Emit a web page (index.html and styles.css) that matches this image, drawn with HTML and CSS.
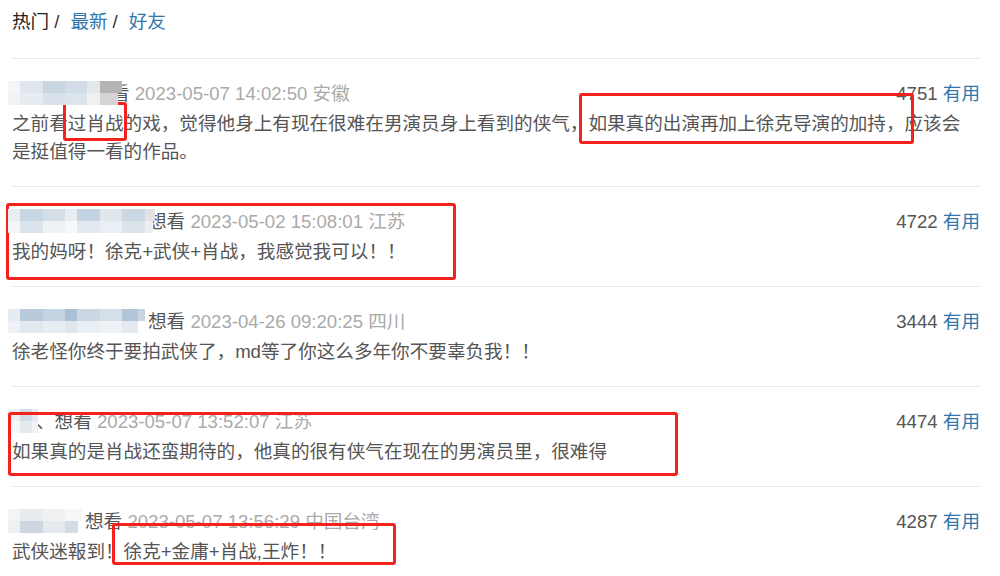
FILE: index.html
```html
<!DOCTYPE html>
<html lang="zh-CN">
<head>
  <meta charset="UTF-8">
  <title>短评</title>
  <meta name="viewport" content="width=device-width, initial-scale=1.0">
  <link rel="stylesheet" href="styles.css">
</head>
<body>
  <div class="page">
    <div class="tabs">
      <span class="cur">热门</span><span class="sep">/</span><a href="#">最新</a><span class="sep">/</span><a href="#">好友</a>
    </div>

    <div class="comment">
      <div class="info">
        <span class="who"><span class="blur b1"></span><span class="status">看</span> <span class="time">2023-05-07 14:02:50 安徽</span></span>
        <span class="votes">4751 <a href="#">有用</a></span>
      </div>
      <p class="short">之前看过肖战的戏，觉得他身上有现在很难在男演员身上看到的侠气，如果真的出演再加上徐克导演的加持，应该会是挺值得一看的作品。</p>
    </div>

    <div class="comment">
      <div class="info">
        <span class="who"><span class="blur b2"></span><span class="status">想看</span> <span class="time">2023-05-02 15:08:01 江苏</span></span>
        <span class="votes">4722 <a href="#">有用</a></span>
      </div>
      <p class="short">我的妈呀！徐克+武侠+肖战，我感觉我可以！！</p>
    </div>

    <div class="comment">
      <div class="info">
        <span class="who"><span class="blur b3"></span><span class="status">想看</span> <span class="time">2023-04-26 09:20:25 四川</span></span>
        <span class="votes">3444 <a href="#">有用</a></span>
      </div>
      <p class="short">徐老怪你终于要拍武侠了，md等了你这么多年你不要辜负我！！</p>
    </div>

    <div class="comment">
      <div class="info">
        <span class="who"><span class="blur b4"></span><span class="status">、想看</span> <span class="time">2023-05-07 13:52:07 江苏</span></span>
        <span class="votes">4474 <a href="#">有用</a></span>
      </div>
      <p class="short">如果真的是肖战还蛮期待的，他真的很有侠气在现在的男演员里，很难得</p>
    </div>

    <div class="comment last">
      <div class="info">
        <span class="who"><span class="blur b5"></span><span class="status">想看</span> <span class="time">2023-05-07 13:56:29 中国台湾</span></span>
        <span class="votes">4287 <a href="#">有用</a></span>
      </div>
      <p class="short">武侠迷報到！徐克+金庸+肖战,王炸！！</p>
    </div>

    <!-- red marks drawn over the screenshot -->
    <div class="mark m1"></div>
    <div class="mark m2"></div>
    <div class="mark m3"></div>
    <div class="mark m4"></div>
    <div class="mark m5"></div>
  </div>
</body>
</html>
```

FILE: styles.css
```css
body {
  margin: 0;
  background: #fff;
  font-family: "Liberation Sans", "Noto Sans CJK SC", sans-serif;
  font-size: 18.6px;
  color: #555;
}
a {
  color: #3377aa;
  text-decoration: none;
}
.page {
  position: relative;
  padding: 0 20px 0 12px;
}
.tabs {
  padding: 8px 0 22px;
  line-height: 28px;
  border-bottom: 1px solid #eaeaea;
  color: #222;
}
.sep {
  margin: 0 11px 0 5px;
  color: #333;
}
.comment {
  padding: 21px 0 20px;
  border-bottom: 1px solid #eaeaea;
}
.comment.last {
  border-bottom: none;
}
.info {
  display: flex;
  justify-content: space-between;
  line-height: 28px;
  margin-bottom: 2px;
}
.status {
  color: #555;
}
.time {
  color: #aaa;
}
.votes {
  color: #555;
}
.short {
  margin: 0;
  padding-right: 14px;
  line-height: 28px;
  color: #555;
}

/* pixelated user names */
.blur {
  position: relative;
  z-index: 1;
  display: inline-block;
  height: 24px;
  margin-left: -4px;
  vertical-align: -5px;
  background-repeat: no-repeat;
  background-size: 100% 50%;
  background-position: top, bottom;
}
.b1 {
  width: 114px;
  margin-right: -11px;
  background-image:
    linear-gradient(90deg, #f3f5f7 0 12px, #dfe6ee 12px 35px, #c9d5e1 35px 57px, #d2dce6 57px 79px, #e3e8ec 79px 92px, #b4b4b4 92px 114px),
    linear-gradient(90deg, #f0f2f4 0 12px, #e6ecf2 12px 35px, #d9e2ea 35px 57px, #dde5ec 57px 79px, #eef0f2 79px 92px, #d4d4d4 92px 110px, transparent 110px);
}
.b2 {
  width: 147px;
  margin-right: -7px;
  background-image:
    linear-gradient(90deg, #e9eef3 0 12px, #c8d6e4 12px 35px, #d5dfe8 35px 57px, #e8edf2 57px 69px, #c4d3e1 69px 92px, #dfe6ed 92px 114px, #cbd8e4 114px 137px, #e2e2e2 137px 147px),
    linear-gradient(90deg, #f3f5f7 0 12px, #dbe4ec 12px 35px, #eef2f5 35px 57px, #f7f8fa 57px 69px, #e2e9f0 69px 92px, #eaeff3 92px 114px, #dbe3eb 114px 137px, #eeeeee 137px 145px, transparent 145px);
}
.b3 {
  width: 137px;
  margin-right: 3px;
  background-image:
    linear-gradient(90deg, #e6ecf2 0 12px, #b8cadb 12px 35px, #c5d4e2 35px 57px, #aac0d5 57px 69px, #cbd8e4 69px 92px, #d5dfe9 92px 114px, #b3c6d8 114px 130px, #c7d4e1 130px 137px),
    linear-gradient(90deg, #eef2f6 0 12px, #e1e8ef 12px 35px, #e8edf2 35px 57px, #dfe7ee 57px 69px, #eaeff4 69px 92px, #eef2f5 92px 114px, #e3e9ef 114px 130px, transparent 130px);
}
.b4 {
  width: 30px;
  margin-right: -2px;
  z-index: 0;
  background-image:
    linear-gradient(90deg, #edf1f5 0 12px, #cfdbe6 12px 24px, #e4eaf0 24px 30px),
    linear-gradient(90deg, #f4f6f8 0 12px, #e3eaf0 12px 24px, #f0f3f6 24px 30px);
}
.b5 {
  width: 74px;
  margin-right: 3px;
  background-image:
    linear-gradient(90deg, #f2f4f6 0 12px, #e8ecf0 12px 35px, #eef0f2 35px 57px, #f6f7f8 57px 74px),
    linear-gradient(90deg, #eef1f4 0 12px, #cdd7e1 12px 35px, #e6eaee 35px 57px, #d3dbe3 57px 70px, transparent 70px);
}

/* annotation boxes */
.mark {
  position: absolute;
  box-sizing: border-box;
  border: 3px solid #f5211d;
  border-radius: 3px;
}
.m1 { left: 63px; top: 102px; width: 64px; height: 39px; }
.m2 { left: 579px; top: 93px; width: 335px; height: 51px; }
.m3 { left: 6px; top: 203px; width: 450px; height: 77px; }
.m4 { left: 8px; top: 412px; width: 670px; height: 64px; }
.m5 { left: 112px; top: 523px; width: 284px; height: 42px; }
```
